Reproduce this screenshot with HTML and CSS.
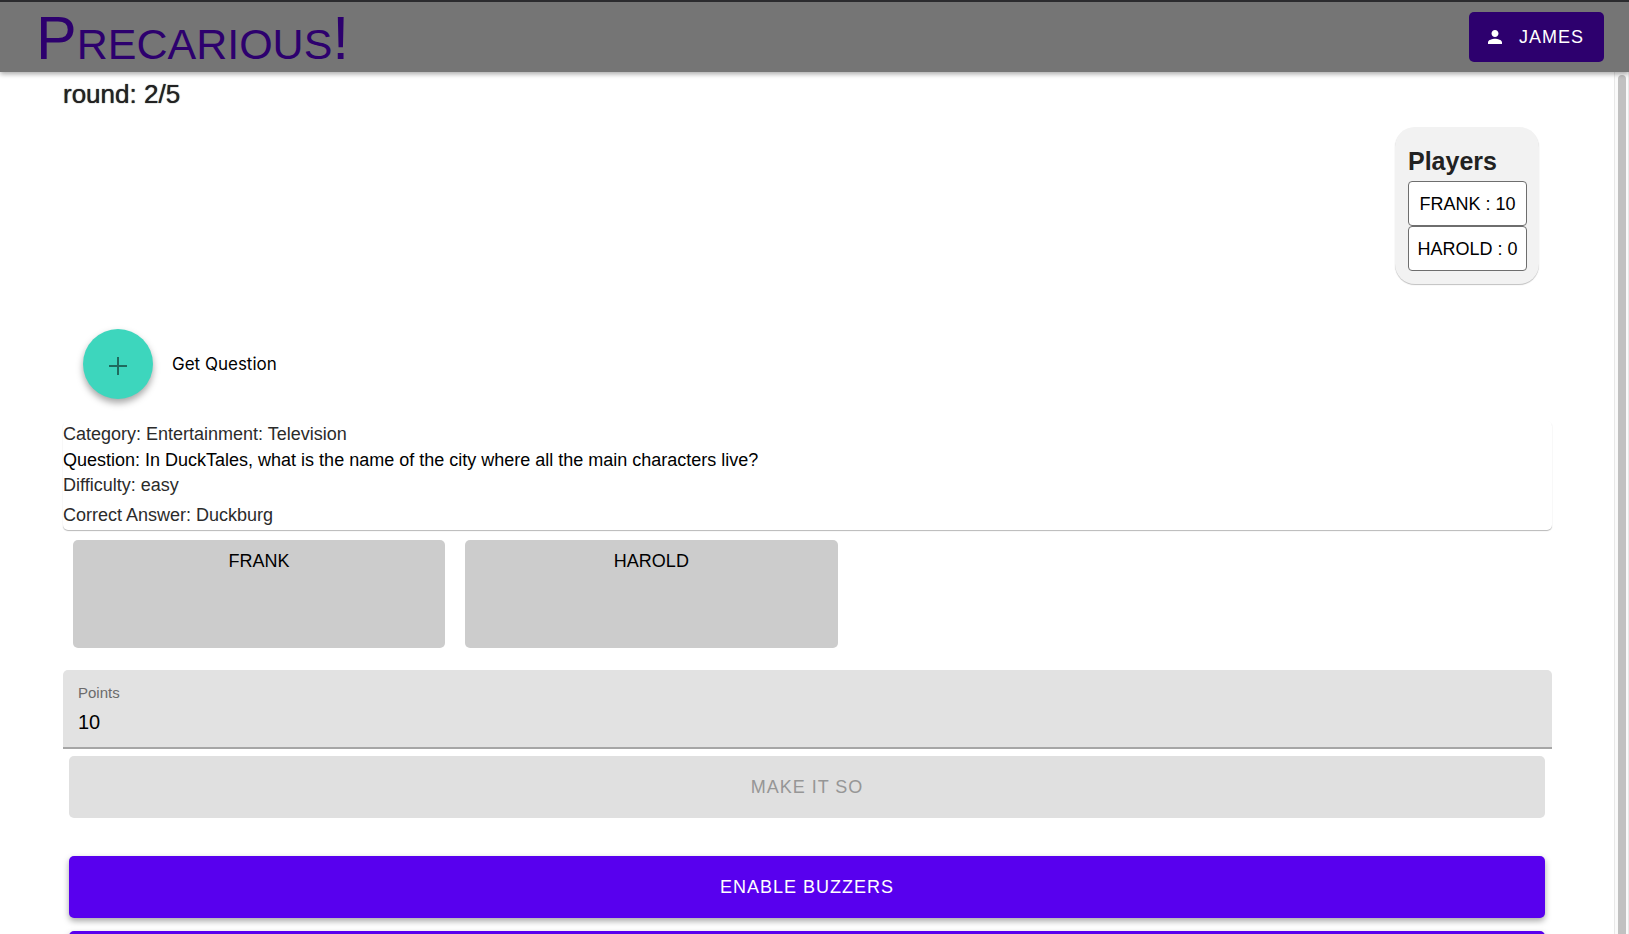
FILE: index.html
```html
<!DOCTYPE html>
<html lang="en">
<head>
<meta charset="utf-8">
<meta name="viewport" content="width=device-width, initial-scale=1">
<title>Precarious!</title>
<link rel="stylesheet" href="styles.css">
</head>
<body>
<header class="top-bar">
  <h1 class="brand">Precarious!</h1>
  <button class="user-button" type="button">
    <svg class="user-icon" viewBox="4 4 16 16" aria-hidden="true"><path d="M12 12c2.21 0 4-1.79 4-4s-1.79-4-4-4-4 1.79-4 4 1.79 4 4 4zm0 2c-2.67 0-8 1.34-8 4v2h16v-2c0-2.66-5.33-4-8-4z"/></svg>
    James
  </button>
</header>
<div class="viewport">
  <main class="content">
    <h2 class="round">round: 2/5</h2>
    <section class="players">
      <h3 class="players-title">Players</h3>
      <ul class="player-list">
        <li class="player">FRANK : 10</li>
        <li class="player">HAROLD : 0</li>
      </ul>
    </section>
    <div class="get-question">
      <button class="fab" id="get-question" type="button" aria-labelledby="get-question-label">
        <svg class="plus" viewBox="0 0 18 18" aria-hidden="true"><path d="M8 0h2v8h8v2h-8v8H8v-8H0V8h8z"/></svg>
      </button>
      <label id="get-question-label" for="get-question">Get Question</label>
    </div>
    <section class="question-card">
      <p class="detail">Category: Entertainment: Television</p>
      <p class="question">Question: In DuckTales, what is the name of the city where all the main characters live?</p>
      <p class="detail">Difficulty: easy</p>
      <p class="detail answer">Correct Answer: Duckburg</p>
    </section>
    <div class="contestants">
      <button class="contestant" type="button">FRANK</button>
      <button class="contestant" type="button">HAROLD</button>
    </div>
    <div class="field">
      <label class="field-label" for="points">Points</label>
      <input class="field-input" id="points" type="text" inputmode="numeric" value="10">
    </div>
    <div class="actions">
      <button class="action action-submit" type="button" disabled>Make it so</button>
      <button class="action" type="button">Enable buzzers</button>
      <button class="action" type="button" aria-label="Next action"></button>
    </div>
  </main>
  <div class="scroll-track" aria-hidden="true"><div class="scroll-thumb"></div></div>
</div>
</body>
</html>
```
FILE: styles.css
```css
* {
  box-sizing: border-box;
}

body {
  display: flex;
  flex-direction: column;
  height: 100vh;
  margin: 0;
  overflow: hidden;
  background: #fff;
  color: #000;
  font-family: "Liberation Sans", Arial, sans-serif;
  font-size: 18px;
}

h1, h2, h3, p, ul {
  margin: 0;
  padding: 0;
}

button, input {
  border: 0;
  color: inherit;
  font: inherit;
}

.top-bar {
  z-index: 1;
  display: flex;
  flex: none;
  align-items: center;
  justify-content: space-between;
  height: 72px;
  padding: 0 25px 0 36px;
  border-top: 2px solid #2b2b2e;
  background: #757575;
  box-shadow: 0 2px 5px rgba(0, 0, 0, 0.35);
}

.brand {
  padding-top: 2px;
  color: #2d006e;
  font-size: 61px;
  font-weight: 400;
  font-variant: small-caps;
  line-height: 68px;
}

.user-button {
  display: flex;
  align-items: center;
  gap: 17px;
  height: 50px;
  padding: 0 20px 0 19px;
  border-radius: 5px;
  background: #2d006e;
  color: #fff;
  letter-spacing: 1px;
  text-transform: uppercase;
}

.user-icon {
  width: 14px;
  height: 14px;
  fill: currentColor;
}

.viewport {
  display: flex;
  flex: 1;
  min-height: 0;
}

.content {
  display: flex;
  flex: 1;
  flex-direction: column;
  min-width: 0;
  padding: 6px 62px 0 63px;
  overflow: hidden;
}

.content > * {
  flex: none;
}

.round {
  color: #222;
  font-size: 26px;
  font-weight: 400;
  line-height: 32px;
  text-shadow: 0 0 1px #222;
}

.players {
  align-self: flex-end;
  margin: 17px 13px 0 0;
  padding: 18px 12px 13px 13px;
  border-radius: 20px;
  background: #f2f2f2;
  box-shadow: 0 1px 1px rgba(0, 0, 0, 0.25);
}

.players-title {
  color: #222;
  font-size: 25px;
  line-height: 32px;
  margin-bottom: 4px;
}

.player-list {
  list-style: none;
}

.player {
  width: 119px;
  padding-top: 1px;
  border: 1px solid #6e6e6e;
  border-radius: 4px;
  background: #fff;
  line-height: 42px;
  text-align: center;
  white-space: nowrap;
}

.get-question {
  display: flex;
  align-items: center;
  gap: 19px;
  margin-top: 45px;
  padding-left: 20px;
  font-family: Inter, "Liberation Sans", sans-serif;
  font-size: 17px;
}

.fab {
  display: flex;
  align-items: center;
  justify-content: center;
  width: 70px;
  height: 70px;
  padding: 3px 0 0;
  border-radius: 50%;
  background: #3dd6bd;
  box-shadow: 0 4px 7px rgba(0, 0, 0, 0.35);
}

.plus {
  width: 18px;
  height: 18px;
  fill: #1f6b5e;
}

.question-card {
  margin-top: 22px;
  padding-top: 1px;
  border-radius: 5px;
  box-shadow: 0 1px 1px rgba(0, 0, 0, 0.28);
  line-height: 25px;
}

.detail {
  color: #2b2b2b;
}

.question {
  line-height: 26px;
}

.answer {
  padding: 5px 0 2px;
}

.contestants {
  display: flex;
}

.contestant {
  display: flex;
  flex: none;
  justify-content: center;
  width: 25%;
  min-height: 108px;
  margin: 10px;
  padding: 11px 10px;
  border-radius: 5px;
  background: #ccc;
}

.field {
  display: flex;
  flex-direction: column;
  margin-top: 12px;
  padding: 13px 15px 5px;
  border-bottom: 2px solid #a6a6a6;
  border-radius: 5px 5px 0 0;
  background: #e2e2e2;
}

.field-label {
  color: #6b6b6b;
  font-size: 15px;
  line-height: 20px;
}

.field-input {
  height: 39px;
  padding: 0;
  background: transparent;
  font-size: 20px;
}

.actions {
  display: flex;
  flex-direction: column;
  gap: 13px;
  padding: 7px 7px 0 6px;
}

.action {
  height: 62px;
  border-radius: 5px;
  background: #5800ee;
  box-shadow: 0 3px 6px rgba(0, 0, 0, 0.35);
  color: #fff;
  letter-spacing: 1px;
  text-transform: uppercase;
}

.action-submit {
  margin-bottom: 25px;
  background: #e0e0e0;
  box-shadow: none;
  color: #969696;
}

.scroll-track {
  display: flex;
  flex: none;
  width: 15px;
  padding: 3px 2px 0 3px;
  border: solid #e8e8e8;
  border-width: 0 1px;
  background: #fafafa;
}

.scroll-thumb {
  flex: 1;
  border-radius: 4px 4px 0 0;
  background: #c1c1c1;
}
```
